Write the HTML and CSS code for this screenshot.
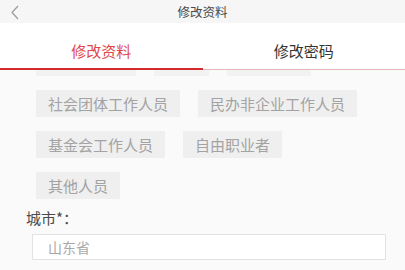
FILE: index.html
```html
<!DOCTYPE html>
<html lang="zh-CN">
<head>
<meta charset="utf-8">
<link rel="stylesheet" href="styles.css">
</head>
<body>
<div class="page">
  <header class="topbar">
    <span class="back"><svg width="8" height="15" viewBox="0 0 8 15"><path d="M7 1 L1 7.5 L7 14" fill="none" stroke="#9a9a9a" stroke-width="1.2"/></svg></span>
    <span class="title">修改资料</span>
    <span></span>
  </header>
  <nav class="tabs">
    <div class="tab active">修改资料</div>
    <div class="tab">修改密码</div>
  </nav>
  <main class="content">
    <div class="inner">
      <div class="chips hidden-row">
        <span class="chip w5"></span>
        <span class="chip w2"></span>
        <span class="chip w4"></span>
      </div>
      <div class="chips">
        <span class="chip">社会团体工作人员</span>
        <span class="chip">民办非企业工作人员</span>
      </div>
      <div class="chips">
        <span class="chip">基金会工作人员</span>
        <span class="chip">自由职业者</span>
      </div>
      <div class="chips last">
        <span class="chip">其他人员</span>
      </div>
      <div class="label">城市*：</div>
      <div class="input">山东省</div>
    </div>
  </main>
</div>
</body>
</html>
```
FILE: styles.css
```css
html, body {
  margin: 0;
  padding: 0;
}
body {
  width: 405px;
  height: 270px;
  overflow: hidden;
  font-family: "Noto Sans CJK SC", "Noto Sans", sans-serif;
  background: #fafafa;
}
.page {
  display: flex;
  flex-direction: column;
  height: 270px;
}
.topbar {
  height: 23px;
  background: #f6f6f6;
  display: grid;
  grid-template-columns: 1fr auto 1fr;
  align-items: center;
}
.back {
  padding-left: 11px;
  display: flex;
  align-items: center;
  padding-top: 2px;
}
.title {
  font-size: 12.5px;
  color: #4a4a4a;
  line-height: 23px;
}
.tabs {
  display: flex;
  height: 47px;
  background: #fff;
}
.tab {
  flex: 1;
  display: flex;
  align-items: center;
  justify-content: center;
  font-size: 15px;
  color: #333;
  border-bottom: 1px solid #e3b7b7;
  padding-top: 9px;
  box-sizing: border-box;
}
.tab.active {
  color: #e04848;
  border-bottom: 2px solid #d42a2a;
}
.content {
  flex: 1;
  overflow: hidden;
  background: #fafafa;
}
.inner {
  margin-top: -21px;
  padding-left: 36px;
}
.chips {
  display: flex;
  gap: 18px;
  margin-bottom: 14px;
}
.chips.last {
  margin-bottom: 0;
}
.chip {
  height: 27px;
  line-height: 27px;
  padding: 0 12px;
  background: #efefef;
  color: #a3a3a3;
  font-size: 15px;
}
.hidden-row .chip {
  background: #f2f2f2;
  padding: 0;
}
.chip.w5 { width: 100px; }
.chip.w2 { width: 55px; }
.chip.w4 { width: 84px; }
.label {
  margin-left: -10px;
  margin-top: 8px;
  line-height: 21px;
  font-size: 15px;
  color: #4a4a4a;
}
.input {
  margin-left: -4px;
  margin-top: 6px;
  width: 354px;
  height: 26px;
  box-sizing: border-box;
  border: 1px solid #e3e3e3;
  background: #fff;
  padding-left: 15px;
  font-size: 14px;
  line-height: 24px;
  color: #a8a8a8;
}
```
